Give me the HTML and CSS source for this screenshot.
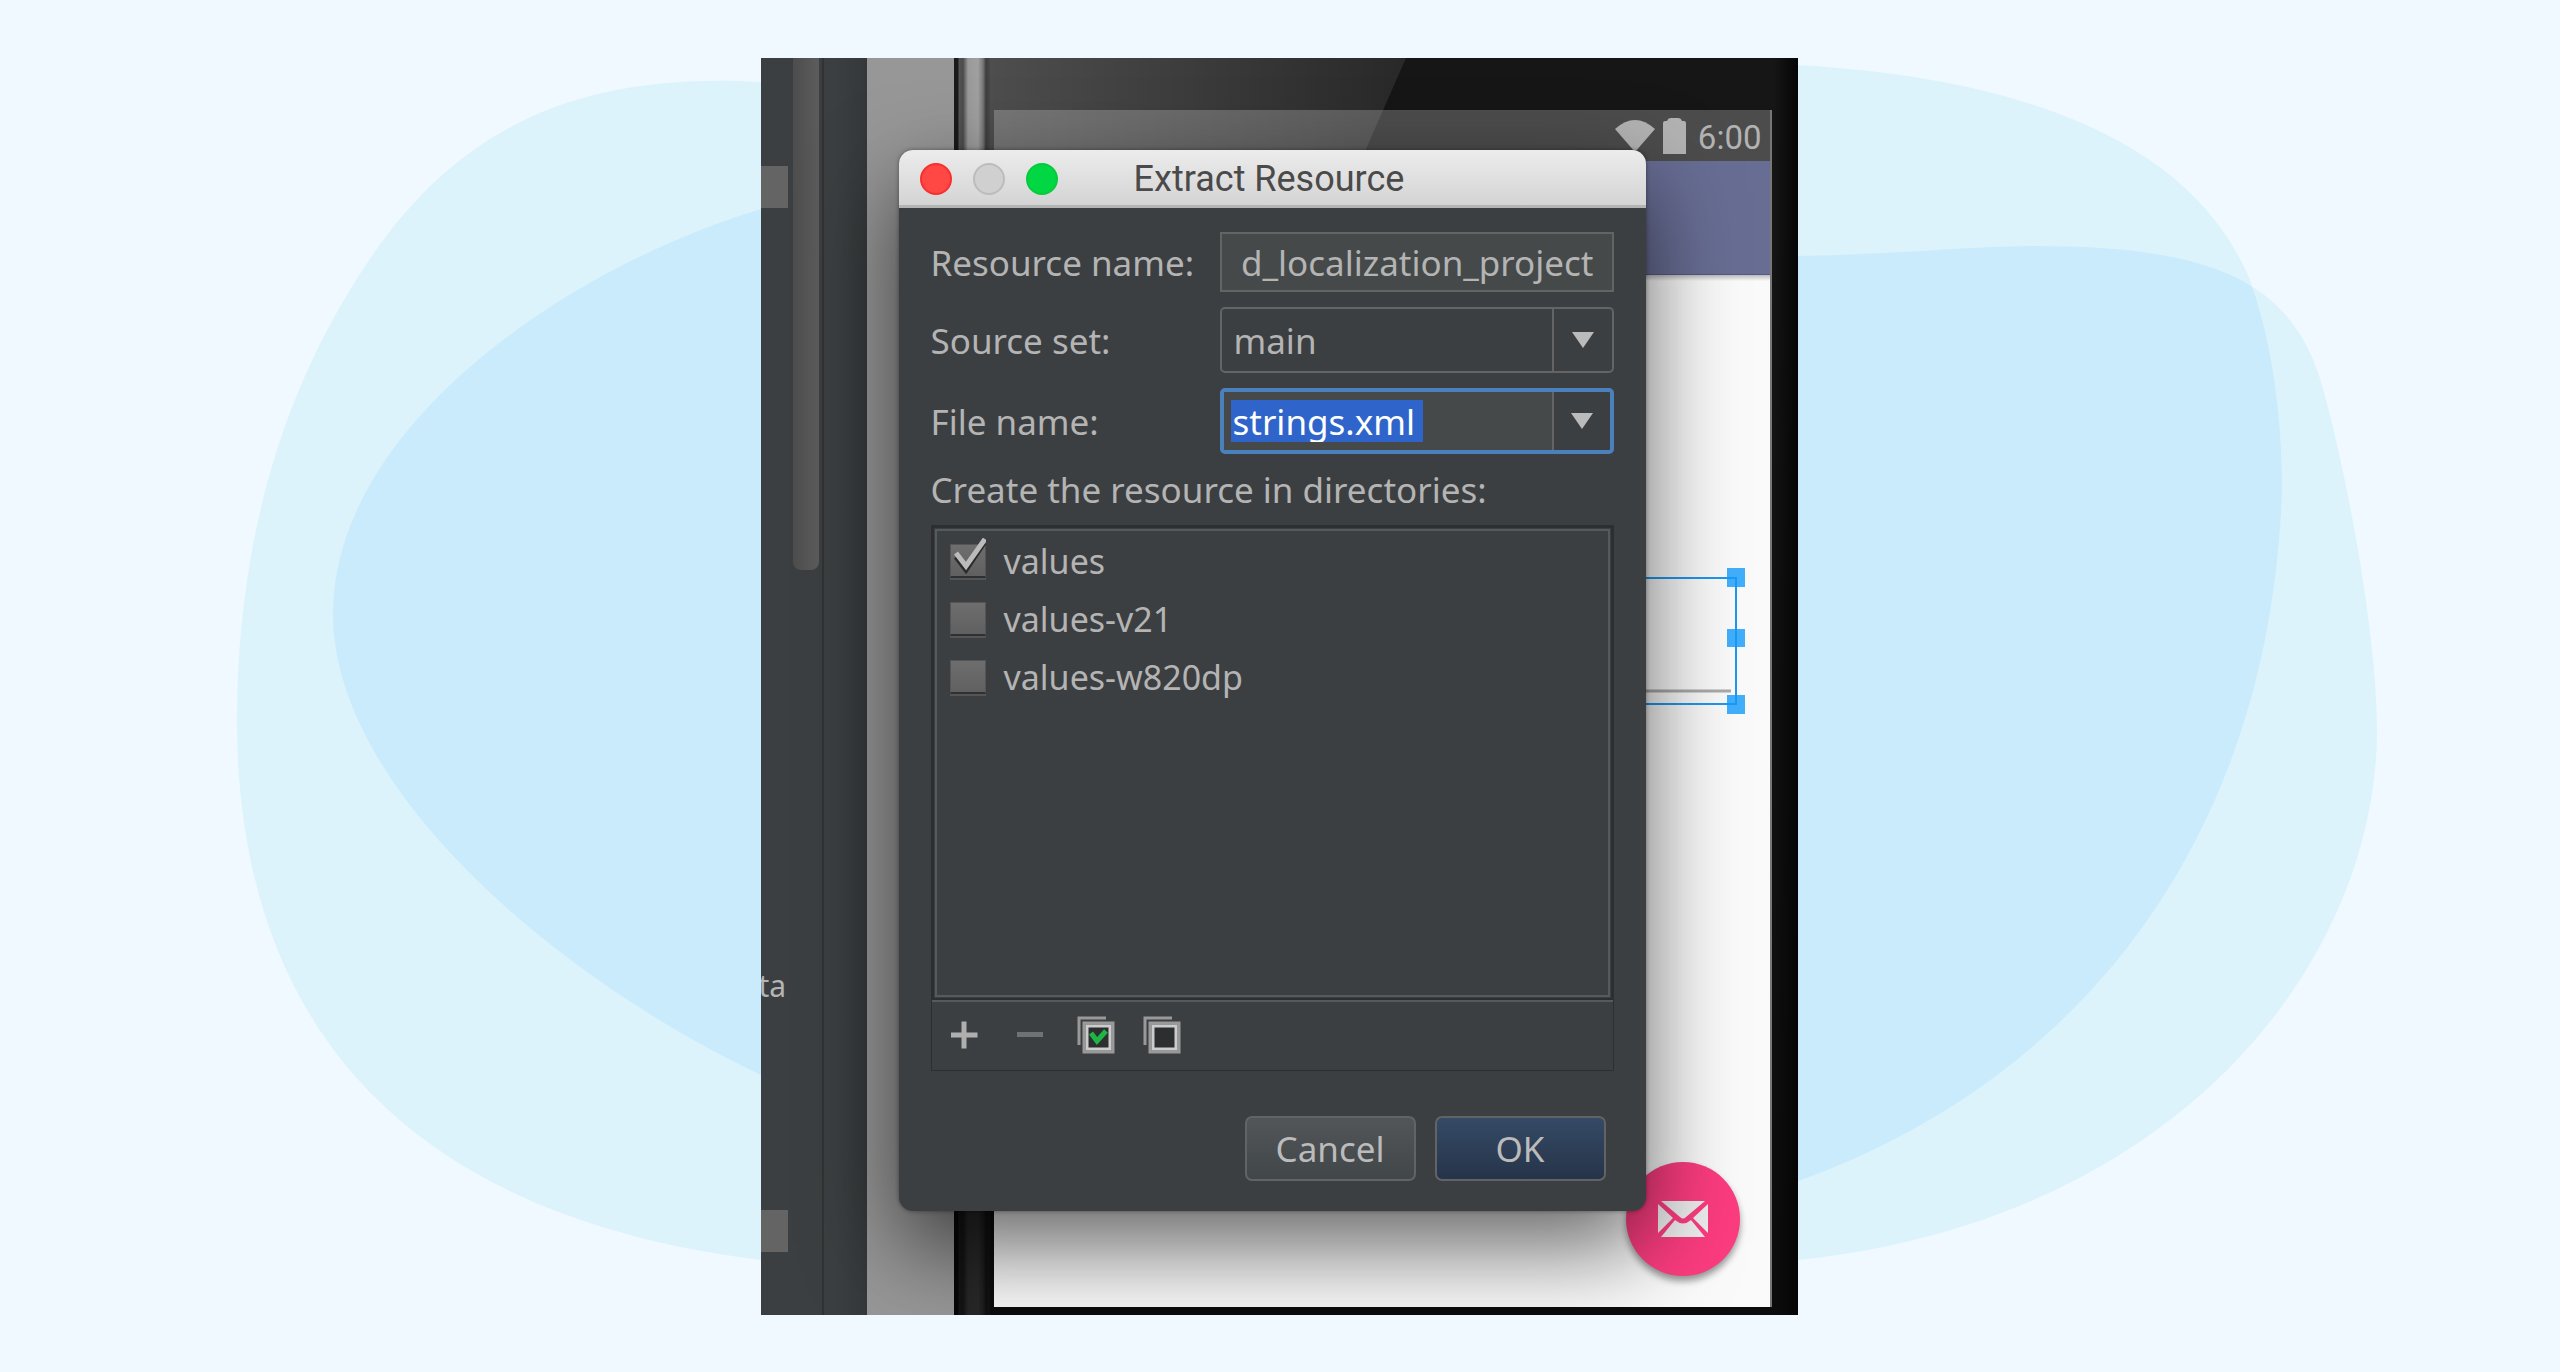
FILE: index.html
```html
<!DOCTYPE html>
<html lang="en">
<head>
<meta charset="utf-8">
<title>Extract Resource</title>
<link rel="stylesheet" href="styles.css">
</head>
<body>
<svg class="blobs" viewBox="0 0 2560 1372" preserveAspectRatio="none" aria-hidden="true">
  <defs>
    <path id="wide" d="M761 82C560 70 440 140 350 290C270 420 237 570 237 720C237 980 360 1210 761 1260H1798C2180 1220 2377 960 2377 730C2377 640 2350 490 2326 400C2300 290 2230 245 2030 246C1960 247 1900 254 1798 256V82Z"/>
    <path id="tilted" d="M1798 65C2060 80 2200 160 2250 280C2275 350 2282 430 2282 490C2270 840 2080 1080 1798 1181L761 1075C560 980 333 790 333 614C333 430 560 270 761 209L1798 65Z"/>
    <clipPath id="overlap"><use href="#tilted"/></clipPath>
  </defs>
  <use class="blob" href="#wide"/>
  <use class="blob" href="#tilted"/>
  <use class="blob-overlap" href="#wide" clip-path="url(#overlap)"/>
</svg>
<main class="stage">
  <section class="shot">
    <aside class="tree">
      <div class="tree-list"><span class="tag"></span><span class="cut-label">ta</span><span class="tag"></span></div>
      <div class="scroll-track"><div class="scroll-thumb"></div></div>
    </aside>
    <div class="canvas"></div>
    <div class="phone">
      <div class="bezel-edge"></div>
      <div class="face">
        <div class="screen">
          <div class="status">
            <svg width="40" height="32" viewBox="0 0 40 32"><path d="M0 9Q20-9 40 9L20 32Z"/></svg>
            <svg width="23" height="36" viewBox="0 0 23 36"><path d="M0 5Q0 3 2 3H4Q5 0 8 0H15Q18 0 19 3H21Q23 3 23 5V36H0Z"/></svg>
            <span>6:00</span>
          </div>
          <div class="appbar"></div>
          <div class="content"></div>
        </div>
      </div>
      <svg class="glare" viewBox="0 0 416 100" preserveAspectRatio="none" aria-hidden="true">
        <defs><linearGradient id="shine"><stop offset="0" stop-color="#fff" stop-opacity=".24"/><stop offset="1" stop-color="#fff" stop-opacity=".08"/></linearGradient></defs>
        <path d="M0 0H416L372 100H0Z" fill="url(#shine)"/>
      </svg>
    </div>
    <svg class="selection" width="130" height="148" viewBox="0 0 130 148" aria-hidden="true">
      <path d="M0 124H101" stroke="#aaa" stroke-width="3"/>
      <path d="M0 11H106V137H0" fill="none" stroke="#1f97ef" stroke-width="2"/>
      <path d="M97 1h18v19h-18zM97 62h18v18h-18zM97 128h18v19h-18z" fill="#149cfb" fill-opacity=".8"/>
    </svg>
    <button class="fab" aria-label="Compose mail"><svg width="50" height="36" viewBox="0 0 50 36"><path d="M3 0H47L28 16Q25 19 22 16ZM0 3L15 17L0 32ZM50 3L35 17L50 32ZM17 19Q25 26 33 19L47 36H3Z"/></svg></button>

    <form class="dialog" onsubmit="return false">
      <header class="titlebar">
        <div class="lights"><i class="light red"></i><i class="light grey"></i><i class="light green"></i></div>
        <h1>Extract Resource</h1>
      </header>
      <div class="body">
        <div class="fields">
          <label for="res">Resource name:</label>
          <div class="box plain"><input id="res" value="d_localization_project"></div>
          <label for="set">Source set:</label>
          <div class="box combo"><select id="set"><option>main</option></select><span class="drop"><svg width="22" height="16" viewBox="0 0 22 16"><path d="M0 0H22L11 16Z"/></svg></span></div>
          <label for="file">File name:</label>
          <div class="box combo focus"><div class="edit"><input id="file" value="strings.xml"></div><span class="drop"><svg width="22" height="16" viewBox="0 0 22 16"><path d="M0 0H22L11 16Z"/></svg></span></div>
        </div>
        <p class="caption">Create the resource in directories:</p>
        <div class="dirs">
          <div class="list">
            <label><input type="checkbox" checked><svg class="tick" width="36" height="36" viewBox="0 0 36 36"><path class="tick-shade" d="M6 19L16 32L34 5"/><path class="tick-line" d="M6 15L16 28L35 1"/></svg>values</label>
            <label><input type="checkbox">values-v21</label>
            <label><input type="checkbox">values-w820dp</label>
          </div>
          <div class="tools">
            <button aria-label="Add"><svg width="38" height="38" viewBox="0 0 38 38"><path d="M6 16.500H16.500V5.500H21.500V16.500H32.500V21.500H21.500V32.500H16.500V21.500H6Z" fill="#afafaf"/></svg></button>
            <button aria-label="Remove"><svg width="38" height="38" viewBox="0 0 38 38"><path d="M6 16H32V21H6Z" fill="#707173"/></svg></button>
            <button aria-label="Select all"><svg width="38" height="38" viewBox="0 0 38 38"><path d="M2 29V2H29" fill="none" stroke="#999" stroke-width="3"/><path d="M7 7H36V36H7Z" fill="#2d2e30" stroke="#999" stroke-width="3"/><path d="M10 10H33V33H10Z" fill="none" stroke="#ccc" stroke-width="3"/><path d="M14 17L20 25L29 15" fill="none" stroke="#1fb546" stroke-width="5"/></svg></button>
            <button aria-label="Unselect all"><svg width="38" height="38" viewBox="0 0 38 38"><path d="M2 29V2H29" fill="none" stroke="#999" stroke-width="3"/><path d="M7 7H36V36H7Z" fill="#2d2e30" stroke="#999" stroke-width="3"/><path d="M10 10H33V33H10Z" fill="none" stroke="#ccc" stroke-width="3"/></svg></button>
          </div>
        </div>
        <footer class="actions"><button class="btn">Cancel</button><button class="btn primary">OK</button></footer>
      </div>
    </form>
  </section>
</main>
</body>
</html>
```
FILE: styles.css
```css
* { box-sizing: border-box; }
body { margin: 0; background: #f0f9ff; font-family: "Noto Sans", sans-serif; font-size: 35px; color: #b4b4b4; }
button, input, select { font: inherit; color: inherit; margin: 0; padding: 0; border: 0; background: none; }
.blobs { position: absolute; inset: 0; width: 100%; height: 100%; }
.blob { fill: #dcf3fc; }
.blob-overlap { fill: #caebfc; }

.stage { display: flex; justify-content: center; padding: 58px 2px 50px 0; }
.shot { position: relative; display: flex; width: 1037px; overflow: hidden; min-height: 1257px; }

.tree { display: flex; width: 106px; background: linear-gradient(90deg, #3c3f41 70%, #35383a); }
.tree-list { width: 32px; display: flex; flex-direction: column; align-items: flex-start; padding: 108px 0 63px; }
.tag { width: 27px; height: 42px; background: #646464; }
.cut-label { font-size: 30px; line-height: 40px; margin: auto 0 204px -2px; }
.scroll-track { width: 31px; border-right: 2px solid #303234; }
.scroll-thumb { width: 26px; height: 512px; background: linear-gradient(90deg, #4d4d4d, #5c5c5c); border-radius: 0 0 8px 8px; }
.canvas { width: 87px; background: #979797; }

.phone { position: relative; flex: 1; display: flex; background: #111; }
.bezel-edge { width: 36px; background: linear-gradient(transparent 20%, rgba(0,0,0,.75) 75%), linear-gradient(90deg, #1a1a1a 0 4px, #555 5px, #4b4b4b 9px, #999 14px, #a0a0a0 24px, #777 29px, #3d3d3d 32px, #4a4a4a); }
.face { flex: 1; display: flex; padding: 52px 26px 8px 4px; background: linear-gradient(90deg, transparent 97%, #050505), linear-gradient(#161616, #0c0c0c); }
.screen { flex: 1; display: flex; flex-direction: column; border-right: 2px solid #777; }
.status { height: 51px; display: flex; justify-content: flex-end; align-items: center; gap: 8px; padding-right: 8px; background: #4c4c4c; font: 33px/50px Roboto, sans-serif; color: #b3b3b3; fill: #b3b3b3; }
.status span { padding: 4px 0 0 4px; }
.appbar { height: 114px; background: #686d94; border-bottom: 1px solid #555a80; }
.content { flex: 1; background: linear-gradient(#bbb, #fafafa 6px); }
.glare { position: absolute; left: 36px; top: 0; width: 416px; height: 100px; }

.selection { position: absolute; left: 869px; top: 509px; }
.fab { position: absolute; left: 865px; top: 1104px; width: 114px; height: 114px; border-radius: 50%; background: #fc3c7f; box-shadow: 0 5px 7px rgba(0,0,0,.4); display: grid; place-items: center; fill: #eee; }

.dialog { position: absolute; left: 138px; top: 92px; width: 747px; border-radius: 14px; background: #3c3f41; box-shadow: 0 0 4px rgba(0,0,0,.4), 0 36px 90px rgba(0,0,0,.6); }
.titlebar { position: relative; display: flex; align-items: center; justify-content: center; height: 58px; border-radius: 14px 14px 0 0; background: linear-gradient(#ececec, #d4d4d4); border-bottom: 3px solid #b4b4b4; }
.titlebar h1 { margin: 0; padding: 4px 6px 0 0; font: 36px/51px Roboto, sans-serif; color: #4a4a4a; }
.lights { position: absolute; left: 21px; top: 13px; display: flex; gap: 21px; }
.light { width: 32px; height: 32px; border-radius: 50%; border: 2px solid; }
.red { background: #ff4744; border-color: #f7302f; }
.grey { background: #d0d0d0; border-color: #bcbcbc; }
.green { background: #00d742; border-color: #06cb3d; }

.body { padding: 24px 32px 30px; }
.fields { display: grid; grid-template-columns: 289px 1fr; row-gap: 15px; align-items: center; }
.box { display: flex; height: 66px; border: 2px solid #646464; border-radius: 5px; min-width: 0; }
.box input, .box select { width: 100%; min-width: 0; outline: 0; appearance: none; }
.plain { height: 60px; border-radius: 0; background: #45494a; padding: 0 18px 0 12px; }
.plain input { text-align: right; }
.combo select { flex: 1; padding-left: 12px; }
.drop { width: 60px; flex: none; border-left: 2px solid #646464; display: grid; place-items: center; fill: #bbb; }
.focus { border: 4px solid #4a81bd; }
.focus .drop { width: 58px; }
.edit { flex: 1; display: flex; align-items: center; background: #45494a; padding-left: 7px; }
.edit input { width: 192px; height: 42px; background: #2f65ca; color: #fff; padding-left: 2px; }
.caption { margin: 14px 0 13px; line-height: 44px; }
.dirs { border: 1px solid #2c2e30; }
.list { height: 474px; border: 2px solid #2c2e30; outline: 2px solid #555a5c; outline-offset: -5px; padding: 4px 16px; font-size: 34px; }
.list label { position: relative; display: flex; align-items: center; gap: 18px; height: 58px; }
.list input { appearance: none; width: 36px; height: 34px; background: linear-gradient(#6e6e6e, #606060); border: 1px solid #555; border-bottom: 2px solid #2e3032; box-shadow: 0 2px #555; }
.tick { position: absolute; left: 0; top: 6px; fill: none; stroke-width: 5; }
.tick-shade { stroke: #2b2b2b; }
.tick-line { stroke: #bbb; }
.tools { display: flex; gap: 28px; height: 70px; padding: 14px 13px; border-top: 2px solid #555a5c; }
.tools button { height: 38px; width: 38px; }
.tools svg { display: block; }
.actions { display: flex; justify-content: flex-end; gap: 19px; padding: 45px 8px 0; }
.btn { width: 171px; height: 65px; border: 2px solid #616365; border-radius: 7px; background: linear-gradient(#525658, #414648); color: #bbb; }
.primary { background: linear-gradient(#354a66, #263449); }
```
